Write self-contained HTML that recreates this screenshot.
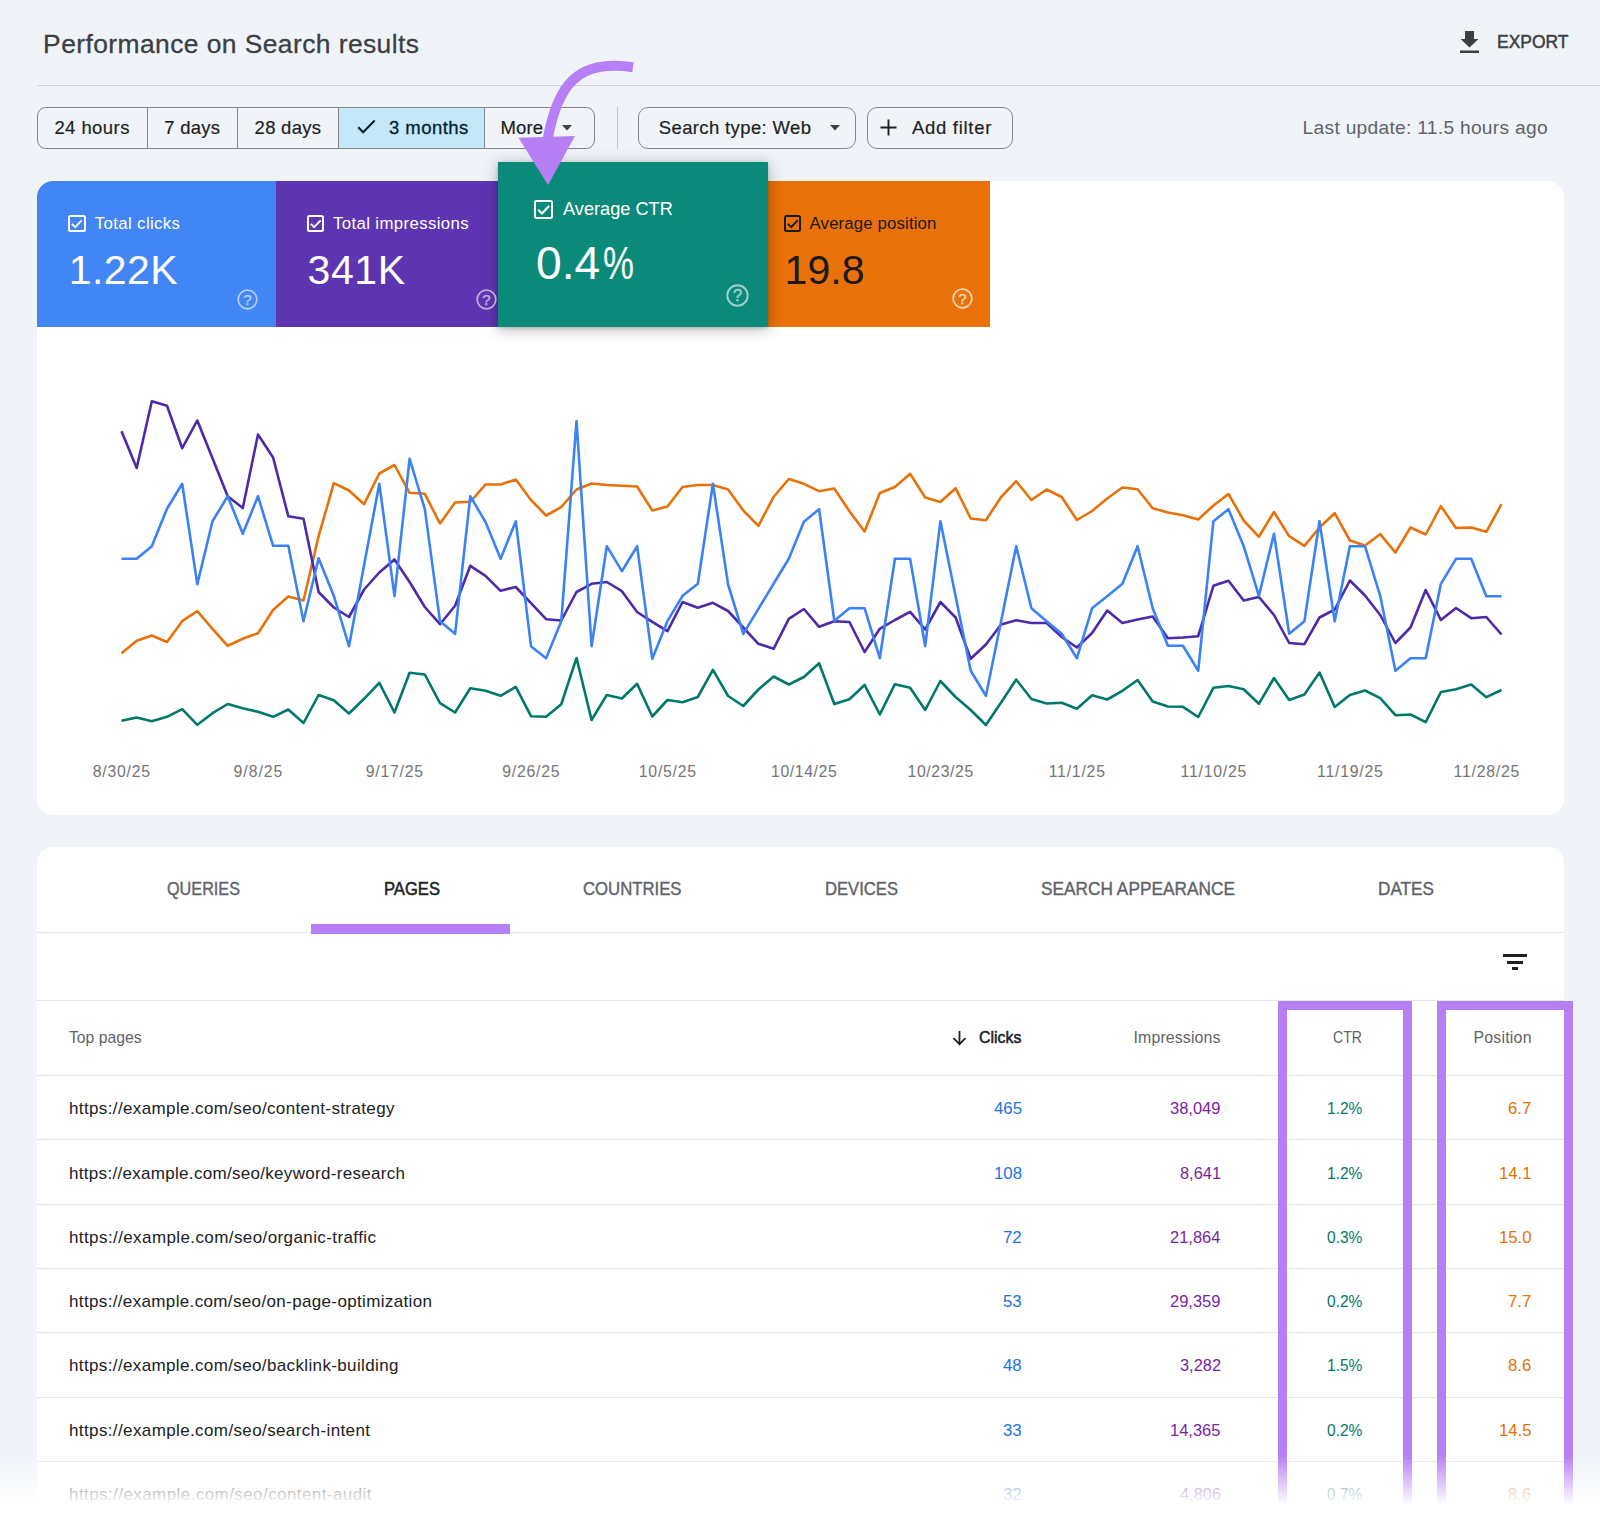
<!DOCTYPE html>
<html lang="en"><head><meta charset="utf-8"><title>Performance on Search results</title>
<style>
*{box-sizing:border-box;margin:0;padding:0}
html,body{width:1600px;height:1516px;overflow:hidden}
body{background:#f0f4f9;font-family:"Liberation Sans",sans-serif;position:relative}
.a{position:absolute}
.t{position:absolute;white-space:nowrap;line-height:1;transform-origin:0 50%;font-family:"Liberation Sans",sans-serif}
.hr{position:absolute;height:1px;background:#e4e6e9}
.chip{position:absolute;top:107px;height:42px;border:1px solid #80868b;border-radius:9px}
.seg{position:absolute;top:107px;height:42px;width:1px;background:#80868b}
.card{position:absolute;left:37px;width:1527px;background:#fff;border-radius:16px}
.tile{position:absolute;top:181px;height:145.5px}
.cb{position:absolute;width:17.4px;height:17.4px;border:2px solid #fff;border-radius:2.5px}
.hl{position:absolute;border:9.8px solid #b67ff5;border-bottom:none}
.fade{position:absolute;left:0;top:1455px;width:1600px;height:61px;background:linear-gradient(to bottom,rgba(255,255,255,0) 0,#fff 50px,#fff 61px)}
svg{position:absolute;overflow:visible}

</style></head>
<body>
<!-- header -->
<div class="hr" style="left:37px;top:85px;width:1563px;background:#cdd7da"></div>
<svg style="left:1460px;top:31px" width="19" height="22" viewBox="0 0 19 22"><path d="M5 0h9v8h4.5L9.5 16.6 .6 8H5z M0 19.6h19v2.4H0z" fill="#3c4043"/></svg>

<!-- date chips -->
<div class="a" style="left:338px;top:107px;width:146px;height:42px;background:#c5e8f8"></div>
<div class="chip" style="left:37px;width:558px"></div>
<div class="seg" style="left:147px"></div>
<div class="seg" style="left:237px"></div>
<div class="seg" style="left:338px"></div>
<div class="seg" style="left:484px"></div>
<svg style="left:357px;top:119px" width="19" height="15" viewBox="0 0 19 15"><path d="M1.2 8.2l5 5L17.6 1.6" fill="none" stroke="#001d35" stroke-width="2.1"/></svg>
<svg style="left:562px;top:124.5px" width="10" height="6" viewBox="0 0 10 6"><path d="M0 0h10L5 5.4z" fill="#3c4043"/></svg>
<div class="a" style="left:617px;top:107px;width:1px;height:42px;background:#c4c7c5"></div>
<div class="chip" style="left:638px;width:218px;border-radius:10px"></div>
<svg style="left:830px;top:124.5px" width="10" height="6" viewBox="0 0 10 6"><path d="M0 0h10L5 5.4z" fill="#3c4043"/></svg>
<div class="chip" style="left:867px;width:146px;border-radius:10px"></div>
<svg style="left:880px;top:118.7px" width="17" height="17" viewBox="0 0 17 17"><path d="M8.5 0.5v16M0.5 8.5h16" stroke="#1f1f1f" stroke-width="1.9" fill="none"/></svg>

<!-- chart card -->
<div class="card" style="top:181px;height:634px"></div>
<div class="tile" style="left:37px;width:239px;background:#4285f4;border-top-left-radius:16px"></div>
<div class="tile" style="left:276px;width:222px;background:#5e35b1"></div>
<div class="tile" style="left:768px;width:222px;background:#e8710a"></div>
<div class="a" style="left:498px;top:162px;width:270px;height:164.5px;background:#0b8a7a;box-shadow:0 2px 14px rgba(0,0,0,.30),0 1px 3px rgba(0,0,0,.15)"></div>

<div class="cb" style="left:68.4px;top:214.6px"></div>
<svg style="left:68.4px;top:214.6px" width="17.4" height="17.4" viewBox="0 0 18 18"><path d="M4 9.2l3.4 3.4L14.2 5.6" fill="none" stroke="#fff" stroke-width="2"/></svg>
<div class="cb" style="left:306.9px;top:214.6px"></div>
<svg style="left:306.9px;top:214.6px" width="17.4" height="17.4" viewBox="0 0 18 18"><path d="M4 9.2l3.4 3.4L14.2 5.6" fill="none" stroke="#fff" stroke-width="2"/></svg>
<div class="cb" style="left:534px;top:200.2px;width:19.2px;height:19.2px"></div>
<svg style="left:534px;top:200.2px" width="19.2" height="19.2" viewBox="0 0 18 18"><path d="M4 9.2l3.4 3.4L14.2 5.6" fill="none" stroke="#fff" stroke-width="2"/></svg>
<div class="cb" style="left:784px;top:214.6px;border-color:#1a1a1a"></div>
<svg style="left:784px;top:214.6px" width="17.4" height="17.4" viewBox="0 0 18 18"><path d="M4 9.2l3.4 3.4L14.2 5.6" fill="none" stroke="#1a1a1a" stroke-width="2"/></svg>

<!-- help icons -->
<svg style="left:237px;top:288.5px" width="21" height="21" viewBox="0 0 21 21"><g opacity=".6"><circle cx="10.5" cy="10.5" r="9.3" fill="none" stroke="#fff" stroke-width="1.8"/><text x="10.5" y="15.6" text-anchor="middle" font-family="Liberation Sans, sans-serif" font-size="15" fill="#fff" stroke="#fff" stroke-width="0.4">?</text></g></svg>
<svg style="left:475.5px;top:288.5px" width="21" height="21" viewBox="0 0 21 21"><g opacity=".6"><circle cx="10.5" cy="10.5" r="9.3" fill="none" stroke="#fff" stroke-width="1.8"/><text x="10.5" y="15.6" text-anchor="middle" font-family="Liberation Sans, sans-serif" font-size="15" fill="#fff" stroke="#fff" stroke-width="0.4">?</text></g></svg>
<svg style="left:725.5px;top:284px" width="23" height="23" viewBox="0 0 21 21"><g opacity=".6"><circle cx="10.5" cy="10.5" r="9.3" fill="none" stroke="#fff" stroke-width="1.8"/><text x="10.5" y="15.6" text-anchor="middle" font-family="Liberation Sans, sans-serif" font-size="15" fill="#fff" stroke="#fff" stroke-width="0.4">?</text></g></svg>
<svg style="left:952px;top:288.2px" width="21" height="21" viewBox="0 0 21 21"><g opacity=".7"><circle cx="10.5" cy="10.5" r="9.3" fill="none" stroke="#fff" stroke-width="1.8"/><text x="10.5" y="15.6" text-anchor="middle" font-family="Liberation Sans, sans-serif" font-size="15" fill="#fff" stroke="#fff" stroke-width="0.4">?</text></g></svg>

<!-- chart -->
<svg style="left:0;top:0" width="1600" height="820" viewBox="0 0 1600 820" fill="none" stroke-width="2.6" stroke-linejoin="round" stroke-linecap="butt">
<polyline stroke="#e8710a" points="121.5,653.2 136.7,640.8 151.8,635.5 167.0,642.0 182.2,621.2 197.3,611.2 212.5,628.8 227.7,645.8 242.8,638.8 258.0,633.2 273.1,610.0 288.3,596.5 303.5,600.5 318.6,536.2 333.8,483.2 349.0,490.5 364.1,504.2 379.3,473.5 394.5,465.0 409.6,492.8 424.8,493.8 440.0,523.5 455.1,502.5 470.3,501.8 485.5,484.5 500.6,484.5 515.8,479.5 531.0,500.0 546.1,515.5 561.3,507.0 576.5,489.5 591.6,483.5 606.8,485.0 621.9,485.8 637.1,486.5 652.3,510.5 667.4,506.5 682.6,487.0 697.8,485.0 712.9,485.0 728.1,489.5 743.3,510.5 758.4,525.8 773.6,497.0 788.8,479.0 803.9,483.8 819.1,491.2 834.3,488.5 849.4,511.2 864.6,531.5 879.8,493.0 894.9,487.0 910.1,473.8 925.2,497.5 940.4,502.0 955.6,488.2 970.7,518.5 985.9,520.2 1001.1,497.0 1016.2,481.2 1031.4,500.0 1046.6,489.5 1061.7,497.0 1076.9,520.0 1092.1,511.0 1107.2,498.5 1122.4,487.5 1137.6,489.2 1152.7,508.2 1167.9,512.5 1183.0,515.2 1198.2,519.5 1213.4,505.5 1228.5,494.0 1243.7,520.5 1258.9,536.8 1274.0,512.0 1289.2,536.2 1304.4,545.8 1319.5,527.5 1334.7,513.2 1349.9,540.5 1365.0,545.5 1380.2,534.2 1395.4,552.5 1410.5,527.5 1425.7,534.5 1440.9,506.2 1456.0,528.0 1471.2,527.5 1486.3,531.8 1501.5,504.2"/>
<polyline stroke="#00796b" points="121.5,720.8 136.7,717.5 151.8,721.2 167.0,716.8 182.2,709.2 197.3,724.8 212.5,713.2 227.7,704.0 242.8,708.2 258.0,711.8 273.1,716.8 288.3,709.5 303.5,723.0 318.6,695.0 333.8,700.2 349.0,713.5 364.1,698.8 379.3,682.8 394.5,712.5 409.6,672.8 424.8,674.5 440.0,703.2 455.1,712.5 470.3,688.2 485.5,690.8 500.6,695.8 515.8,686.8 531.0,716.2 546.1,716.8 561.3,704.2 576.5,658.0 591.6,720.0 606.8,695.0 621.9,698.5 637.1,683.8 652.3,716.5 667.4,700.0 682.6,702.2 697.8,697.0 712.9,669.8 728.1,696.0 743.3,706.0 758.4,689.5 773.6,676.5 788.8,684.5 803.9,677.0 819.1,663.2 834.3,704.0 849.4,699.2 864.6,685.0 879.8,714.5 894.9,684.2 910.1,687.8 925.2,710.0 940.4,681.0 955.6,697.0 970.7,710.0 985.9,725.0 1001.1,702.5 1016.2,679.5 1031.4,699.0 1046.6,703.5 1061.7,702.8 1076.9,708.8 1092.1,695.2 1107.2,699.5 1122.4,690.8 1137.6,680.0 1152.7,701.5 1167.9,706.5 1183.0,706.8 1198.2,717.0 1213.4,687.8 1228.5,686.0 1243.7,689.2 1258.9,703.8 1274.0,678.0 1289.2,700.0 1304.4,694.5 1319.5,672.5 1334.7,707.0 1349.9,695.0 1365.0,690.5 1380.2,698.2 1395.4,715.2 1410.5,714.5 1425.7,722.2 1440.9,692.0 1456.0,689.2 1471.2,684.5 1486.3,697.2 1501.5,690.0"/>
<polyline stroke="#4e29a8" points="121.5,431.2 136.7,468.0 151.8,401.2 167.0,405.8 182.2,448.2 197.3,420.5 212.5,458.2 227.7,496.2 242.8,508.0 258.0,434.5 273.1,457.5 288.3,516.2 303.5,518.8 318.6,592.0 333.8,607.5 349.0,617.0 364.1,589.5 379.3,572.5 394.5,559.5 409.6,582.0 424.8,607.0 440.0,624.2 455.1,605.8 470.3,565.8 485.5,575.8 500.6,590.8 515.8,587.0 531.0,603.2 546.1,619.2 561.3,620.5 576.5,592.0 591.6,583.8 606.8,582.0 621.9,591.2 637.1,612.0 652.3,621.8 667.4,631.2 682.6,602.0 697.8,607.8 712.9,602.8 728.1,611.0 743.3,627.5 758.4,643.8 773.6,648.8 788.8,618.8 803.9,609.0 819.1,626.8 834.3,621.2 849.4,622.0 864.6,652.0 879.8,628.8 894.9,620.0 910.1,611.8 925.2,629.5 940.4,602.0 955.6,617.5 970.7,658.8 985.9,644.5 1001.1,624.5 1016.2,620.2 1031.4,623.0 1046.6,623.0 1061.7,637.0 1076.9,647.5 1092.1,633.0 1107.2,610.5 1122.4,623.0 1137.6,619.5 1152.7,616.5 1167.9,638.2 1183.0,637.5 1198.2,636.2 1213.4,585.8 1228.5,580.8 1243.7,600.5 1258.9,597.0 1274.0,615.0 1289.2,643.0 1304.4,644.2 1319.5,617.5 1334.7,609.5 1349.9,580.5 1365.0,595.5 1380.2,615.0 1395.4,643.0 1410.5,627.5 1425.7,590.0 1440.9,620.0 1456.0,608.0 1471.2,618.2 1486.3,617.0 1501.5,634.5"/>
<polyline stroke="#3b82f5" points="121.5,558.8 136.7,558.8 151.8,546.2 167.0,508.8 182.2,483.8 197.3,584.2 212.5,521.2 227.7,496.2 242.8,533.8 258.0,496.2 273.1,545.8 288.3,545.8 303.5,621.2 318.6,558.2 333.8,595.8 349.0,646.2 364.1,565.0 379.3,483.8 394.5,596.2 409.6,458.8 424.8,508.8 440.0,621.2 455.1,633.8 470.3,496.2 485.5,522.0 500.6,558.8 515.8,521.2 531.0,646.2 546.1,658.2 561.3,621.2 576.5,421.2 591.6,646.2 606.8,546.2 621.9,571.2 637.1,546.2 652.3,658.8 667.4,621.2 682.6,595.8 697.8,583.8 712.9,483.8 728.1,584.5 743.3,633.8 758.4,608.8 773.6,583.8 788.8,558.8 803.9,521.8 819.1,509.2 834.3,620.8 849.4,608.2 864.6,608.2 879.8,658.2 894.9,558.8 910.1,558.8 925.2,646.2 940.4,521.2 955.6,596.2 970.7,670.8 985.9,695.8 1001.1,621.2 1016.2,546.2 1031.4,608.2 1046.6,621.2 1061.7,633.8 1076.9,658.2 1092.1,608.2 1107.2,596.2 1122.4,583.8 1137.6,546.2 1152.7,608.2 1167.9,645.8 1183.0,645.8 1198.2,670.8 1213.4,521.2 1228.5,509.2 1243.7,546.2 1258.9,595.8 1274.0,533.8 1289.2,633.8 1304.4,621.2 1319.5,521.2 1334.7,621.2 1349.9,546.2 1365.0,546.2 1380.2,595.8 1395.4,670.8 1410.5,658.2 1425.7,658.2 1440.9,583.8 1456.0,558.8 1471.2,558.8 1486.3,596.2 1501.5,596.2"/>
</svg>

<!-- arrow -->
<svg style="left:0;top:0" width="1600" height="400" viewBox="0 0 1600 400">
<path d="M633 67.3 C578.7 58.9 557.1 83.8 547.4 141" fill="none" stroke="#b67ff5" stroke-width="10"/>
<path d="M518.5 137.8 L575 136 L548 185 Z" fill="#b67ff5"/>
</svg>

<!-- table card -->
<div class="card" style="top:847px;height:720px"></div>
<div class="hr" style="left:37px;top:932px;width:1527px"></div>
<div class="hr" style="left:37px;top:1000px;width:1527px"></div>
<div class="hr" style="left:37px;top:1075px;width:1527px"></div>
<div class="hr" style="left:37px;top:1139px;width:1527px"></div>
<div class="hr" style="left:37px;top:1203.5px;width:1527px"></div>
<div class="hr" style="left:37px;top:1268px;width:1527px"></div>
<div class="hr" style="left:37px;top:1332px;width:1527px"></div>
<div class="hr" style="left:37px;top:1396.5px;width:1527px"></div>
<div class="hr" style="left:37px;top:1461px;width:1527px"></div>
<div class="a" style="left:311px;top:924px;width:198.5px;height:9.5px;background:#b67ff5"></div>
<!-- filter icon -->
<div class="a" style="left:1503px;top:954px;width:24px;height:2.6px;background:#202124"></div>
<div class="a" style="left:1506.7px;top:961.2px;width:16.4px;height:2.6px;background:#202124"></div>
<div class="a" style="left:1511.8px;top:967.3px;width:6.2px;height:2.6px;background:#202124"></div>
<!-- sort arrow -->
<svg style="left:952px;top:1030px" width="15" height="16" viewBox="0 0 15 16"><path d="M7.5 1v13M1.5 8.2l6 6 6-6" fill="none" stroke="#202124" stroke-width="1.8"/></svg>
<!-- highlight boxes -->
<div class="hl" style="left:1278px;top:1000.8px;width:134px;height:520px"></div>
<div class="hl" style="left:1436.8px;top:1000.8px;width:136px;height:520px"></div>

<span class="t" style="left:43.1px;top:31.0px;font-size:26.4px;color:#3c4043;letter-spacing:0.433px;-webkit-text-stroke:0.3px currentColor;">Performance on Search results</span>
<span class="t" style="left:1496.6px;top:33.0px;font-size:18.2px;color:#3c4043;transform:scaleX(0.9588);-webkit-text-stroke:0.5px currentColor;">EXPORT</span>
<span class="t" style="left:54.4px;top:118.6px;font-size:18.5px;color:#1f1f1f;letter-spacing:0.429px;-webkit-text-stroke:0.2px currentColor;">24 hours</span>
<span class="t" style="left:164.2px;top:118.6px;font-size:18.5px;color:#1f1f1f;letter-spacing:0.257px;-webkit-text-stroke:0.2px currentColor;">7 days</span>
<span class="t" style="left:254.6px;top:118.6px;font-size:18.5px;color:#1f1f1f;letter-spacing:0.267px;-webkit-text-stroke:0.2px currentColor;">28 days</span>
<span class="t" style="left:389.0px;top:118.6px;font-size:18.5px;color:#001d35;letter-spacing:0.456px;-webkit-text-stroke:0.3px currentColor;">3 months</span>
<span class="t" style="left:500.6px;top:118.6px;font-size:18.5px;color:#1f1f1f;letter-spacing:0.081px;-webkit-text-stroke:0.2px currentColor;">More</span>
<span class="t" style="left:658.8px;top:118.6px;font-size:18.5px;color:#1f1f1f;letter-spacing:0.365px;-webkit-text-stroke:0.2px currentColor;">Search type: Web</span>
<span class="t" style="left:911.9px;top:118.6px;font-size:18.5px;color:#1f1f1f;letter-spacing:0.720px;-webkit-text-stroke:0.2px currentColor;">Add filter</span>
<span class="t" style="left:1302.6px;top:118.0px;font-size:19.2px;color:#5f6368;letter-spacing:0.287px;">Last update: 11.5 hours ago</span>
<span class="t" style="left:94.8px;top:215.8px;font-size:16.8px;color:#fff;letter-spacing:0.369px;">Total clicks</span>
<span class="t" style="left:68.8px;top:249.8px;font-size:41px;color:#fff;letter-spacing:0.411px;">1.22K</span>
<span class="t" style="left:333.0px;top:215.8px;font-size:16.8px;color:#fff;letter-spacing:0.372px;">Total impressions</span>
<span class="t" style="left:307.5px;top:249.8px;font-size:41px;color:#fff;letter-spacing:0.578px;">341K</span>
<span class="t" style="left:563.1px;top:200.2px;font-size:18.2px;color:#fff;transform:scaleX(0.9995);">Average CTR</span>
<span class="t" style="left:535.6px;top:240.2px;font-size:46.5px;color:#fff;transform:scaleX(0.9929);">0.4</span>
<span class="t" style="left:603.0px;top:240.2px;font-size:46.5px;color:#fff;transform:scaleX(0.7495);">%</span>
<span class="t" style="left:809.6px;top:215.8px;font-size:16.8px;color:#1a1a1a;letter-spacing:0.139px;">Average position</span>
<span class="t" style="left:784.6px;top:249.8px;font-size:41px;color:#1a1a1a;letter-spacing:0.062px;">19.8</span>
<span class="t" style="left:92.8px;top:764.3px;font-size:15.8px;color:#757575;letter-spacing:0.764px;">8/30/25</span>
<span class="t" style="left:233.6px;top:764.3px;font-size:15.8px;color:#757575;letter-spacing:0.976px;">9/8/25</span>
<span class="t" style="left:365.8px;top:764.3px;font-size:15.8px;color:#757575;letter-spacing:0.764px;">9/17/25</span>
<span class="t" style="left:502.3px;top:764.3px;font-size:15.8px;color:#757575;letter-spacing:0.764px;">9/26/25</span>
<span class="t" style="left:638.8px;top:764.3px;font-size:15.8px;color:#757575;letter-spacing:0.764px;">10/5/25</span>
<span class="t" style="left:771.0px;top:764.3px;font-size:15.8px;color:#757575;letter-spacing:0.614px;">10/14/25</span>
<span class="t" style="left:907.5px;top:764.3px;font-size:15.8px;color:#757575;letter-spacing:0.614px;">10/23/25</span>
<span class="t" style="left:1048.7px;top:764.3px;font-size:15.8px;color:#757575;letter-spacing:0.792px;">11/1/25</span>
<span class="t" style="left:1180.5px;top:764.3px;font-size:15.8px;color:#757575;letter-spacing:0.782px;">11/10/25</span>
<span class="t" style="left:1317.0px;top:764.3px;font-size:15.8px;color:#757575;letter-spacing:0.782px;">11/19/25</span>
<span class="t" style="left:1453.5px;top:764.3px;font-size:15.8px;color:#757575;letter-spacing:0.782px;">11/28/25</span>
<span class="t" style="left:167.0px;top:880.4px;font-size:18.8px;color:#5f6368;transform:scaleX(0.8634);-webkit-text-stroke:0.4px currentColor;">QUERIES</span>
<span class="t" style="left:383.5px;top:880.4px;font-size:18.8px;color:#202124;transform:scaleX(0.8843);-webkit-text-stroke:0.5px currentColor;">PAGES</span>
<span class="t" style="left:583.0px;top:880.4px;font-size:18.8px;color:#5f6368;transform:scaleX(0.8905);-webkit-text-stroke:0.4px currentColor;">COUNTRIES</span>
<span class="t" style="left:825.0px;top:880.4px;font-size:18.8px;color:#5f6368;transform:scaleX(0.8854);-webkit-text-stroke:0.4px currentColor;">DEVICES</span>
<span class="t" style="left:1041.0px;top:880.4px;font-size:18.8px;color:#5f6368;transform:scaleX(0.9201);-webkit-text-stroke:0.4px currentColor;">SEARCH APPEARANCE</span>
<span class="t" style="left:1378.0px;top:880.4px;font-size:18.8px;color:#5f6368;transform:scaleX(0.9145);-webkit-text-stroke:0.4px currentColor;">DATES</span>
<span class="t" style="left:69.0px;top:1029.9px;font-size:15.9px;color:#5f6368;transform:scaleX(0.9885);">Top pages</span>
<span class="t" style="left:979.0px;top:1029.9px;font-size:15.9px;color:#202124;letter-spacing:0.025px;-webkit-text-stroke:0.5px currentColor;">Clicks</span>
<span class="t" style="left:1133.5px;top:1029.9px;font-size:15.9px;color:#5f6368;letter-spacing:0.133px;">Impressions</span>
<span class="t" style="left:1333.0px;top:1029.9px;font-size:15.9px;color:#5f6368;transform:scaleX(0.8876);">CTR</span>
<span class="t" style="left:1473.5px;top:1029.9px;font-size:15.9px;color:#5f6368;letter-spacing:0.208px;">Position</span>
<span class="t" style="left:69.0px;top:1100.2px;font-size:17px;color:#202124;letter-spacing:0.375px;">https://example.com/seo/content-strategy</span>
<span class="t" style="left:993.5px;top:1100.2px;font-size:17px;color:#1a73e8;transform:scaleX(0.9885);">465</span>
<span class="t" style="left:1170.2px;top:1100.2px;font-size:17px;color:#7b1fa2;transform:scaleX(0.9683);">38,049</span>
<span class="t" style="left:1326.6px;top:1100.2px;font-size:17px;color:#00796b;transform:scaleX(0.9135);">1.2%</span>
<span class="t" style="left:1508.3px;top:1100.2px;font-size:17px;color:#e37400;transform:scaleX(0.9814);">6.7</span>
<span class="t" style="left:69.0px;top:1164.5px;font-size:17px;color:#202124;letter-spacing:0.305px;">https://example.com/seo/keyword-research</span>
<span class="t" style="left:993.5px;top:1164.5px;font-size:17px;color:#1a73e8;transform:scaleX(0.9885);">108</span>
<span class="t" style="left:1179.5px;top:1164.5px;font-size:17px;color:#7b1fa2;transform:scaleX(0.9636);">8,641</span>
<span class="t" style="left:1326.6px;top:1164.5px;font-size:17px;color:#00796b;transform:scaleX(0.9135);">1.2%</span>
<span class="t" style="left:1499.0px;top:1164.5px;font-size:17px;color:#e37400;transform:scaleX(0.9836);">14.1</span>
<span class="t" style="left:69.0px;top:1228.7px;font-size:17px;color:#202124;letter-spacing:0.404px;">https://example.com/seo/organic-traffic</span>
<span class="t" style="left:1002.8px;top:1228.7px;font-size:17px;color:#1a73e8;transform:scaleX(0.9883);">72</span>
<span class="t" style="left:1170.2px;top:1228.7px;font-size:17px;color:#7b1fa2;transform:scaleX(0.9683);">21,864</span>
<span class="t" style="left:1326.6px;top:1228.7px;font-size:17px;color:#00796b;transform:scaleX(0.9135);">0.3%</span>
<span class="t" style="left:1499.0px;top:1228.7px;font-size:17px;color:#e37400;transform:scaleX(0.9836);">15.0</span>
<span class="t" style="left:69.0px;top:1293.0px;font-size:17px;color:#202124;letter-spacing:0.355px;">https://example.com/seo/on-page-optimization</span>
<span class="t" style="left:1002.8px;top:1293.0px;font-size:17px;color:#1a73e8;transform:scaleX(0.9883);">53</span>
<span class="t" style="left:1170.2px;top:1293.0px;font-size:17px;color:#7b1fa2;transform:scaleX(0.9683);">29,359</span>
<span class="t" style="left:1326.6px;top:1293.0px;font-size:17px;color:#00796b;transform:scaleX(0.9135);">0.2%</span>
<span class="t" style="left:1508.3px;top:1293.0px;font-size:17px;color:#e37400;transform:scaleX(0.9814);">7.7</span>
<span class="t" style="left:69.0px;top:1357.2px;font-size:17px;color:#202124;letter-spacing:0.371px;">https://example.com/seo/backlink-building</span>
<span class="t" style="left:1002.8px;top:1357.2px;font-size:17px;color:#1a73e8;transform:scaleX(0.9883);">48</span>
<span class="t" style="left:1179.5px;top:1357.2px;font-size:17px;color:#7b1fa2;transform:scaleX(0.9636);">3,282</span>
<span class="t" style="left:1326.6px;top:1357.2px;font-size:17px;color:#00796b;transform:scaleX(0.9135);">1.5%</span>
<span class="t" style="left:1508.3px;top:1357.2px;font-size:17px;color:#e37400;transform:scaleX(0.9814);">8.6</span>
<span class="t" style="left:69.0px;top:1421.5px;font-size:17px;color:#202124;letter-spacing:0.382px;">https://example.com/seo/search-intent</span>
<span class="t" style="left:1002.8px;top:1421.5px;font-size:17px;color:#1a73e8;transform:scaleX(0.9883);">33</span>
<span class="t" style="left:1170.2px;top:1421.5px;font-size:17px;color:#7b1fa2;transform:scaleX(0.9683);">14,365</span>
<span class="t" style="left:1326.6px;top:1421.5px;font-size:17px;color:#00796b;transform:scaleX(0.9135);">0.2%</span>
<span class="t" style="left:1499.0px;top:1421.5px;font-size:17px;color:#e37400;transform:scaleX(0.9836);">14.5</span>
<span class="t" style="left:69.0px;top:1485.7px;font-size:17px;color:#202124;letter-spacing:0.423px;">https://example.com/seo/content-audit</span>
<span class="t" style="left:1002.8px;top:1485.7px;font-size:17px;color:#1a73e8;transform:scaleX(0.9883);">32</span>
<span class="t" style="left:1179.5px;top:1485.7px;font-size:17px;color:#7b1fa2;transform:scaleX(0.9636);">4,806</span>
<span class="t" style="left:1326.6px;top:1485.7px;font-size:17px;color:#00796b;transform:scaleX(0.9135);">0.7%</span>
<span class="t" style="left:1508.3px;top:1485.7px;font-size:17px;color:#e37400;transform:scaleX(0.9814);">8.6</span>
<div class="fade"></div>
</body></html>
